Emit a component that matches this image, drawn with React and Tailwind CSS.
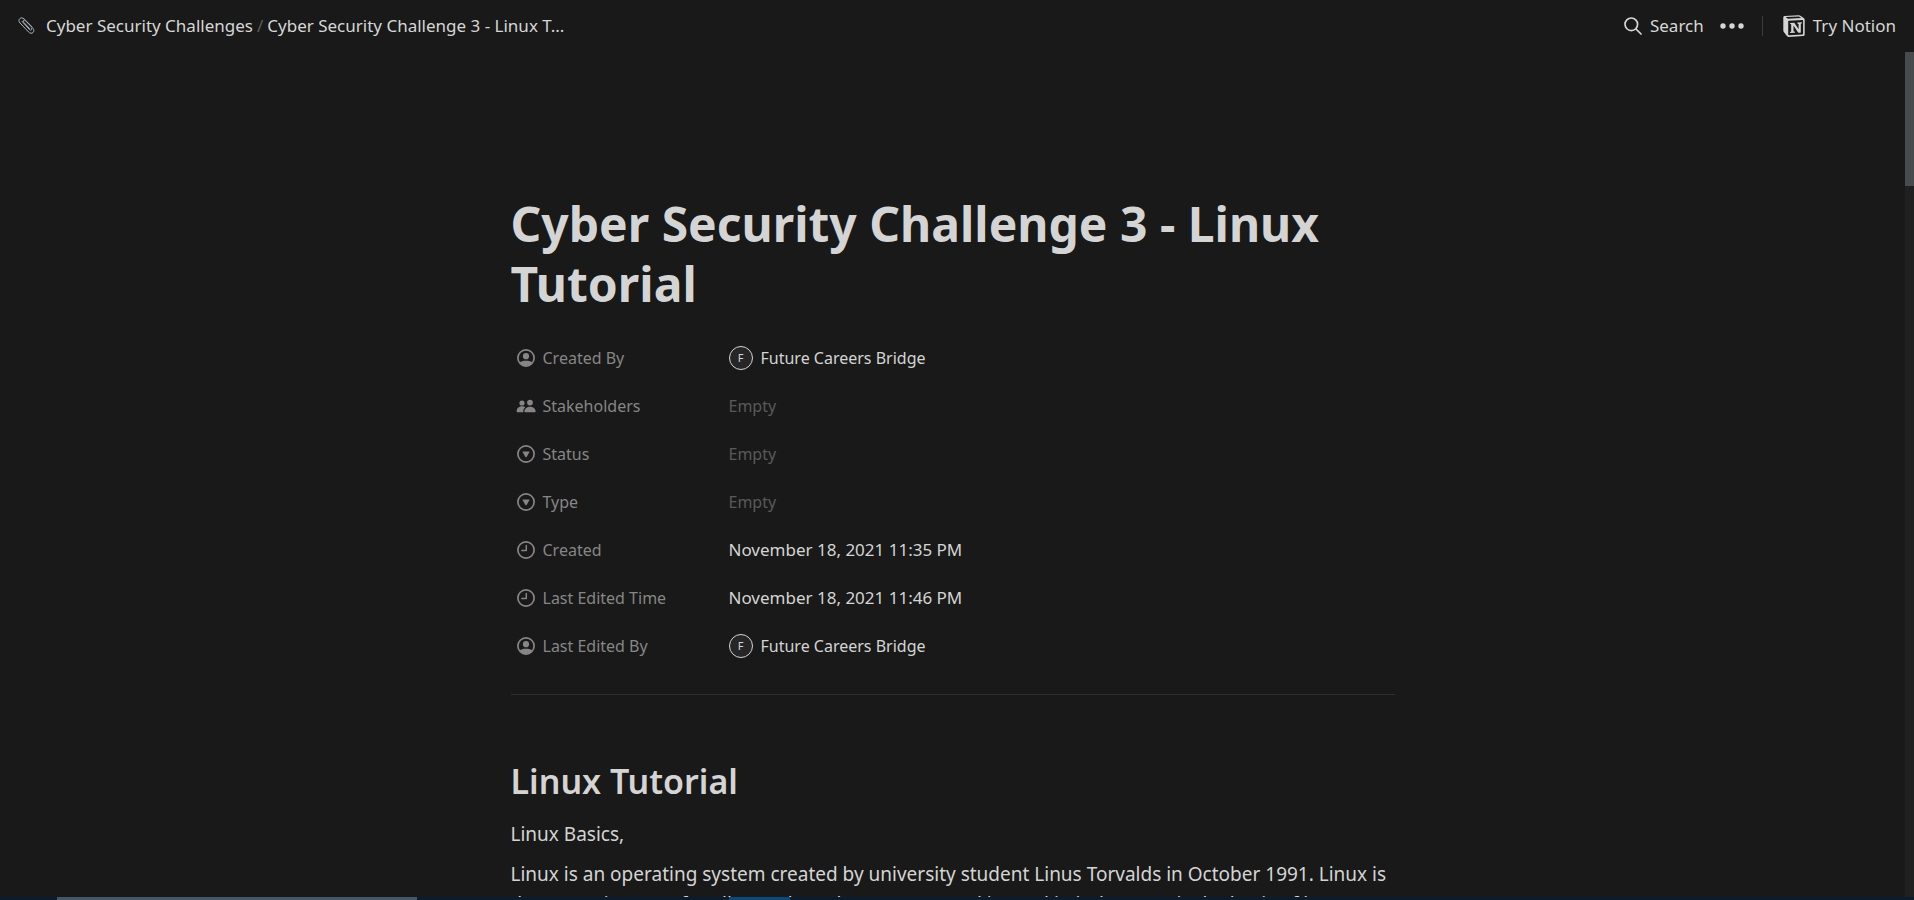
import React from "react";

const font = "font-['Noto_Sans','Open_Sans',sans-serif]";

function PersonIcon() {
  return (
    <svg viewBox="0 0 18 18" className="size-[18px] shrink-0" aria-hidden="true">
      <circle cx="9" cy="9" r="8.1" fill="none" stroke="currentColor" strokeWidth="1.7" />
      <circle cx="9" cy="7.2" r="3.1" fill="currentColor" />
      <path d="M2.6 13.4C4.6 11.2 13.4 11.2 15.4 13.4 12.5 18.3 5.5 18.3 2.6 13.4Z" fill="currentColor" />
    </svg>
  );
}

function PeopleIcon() {
  return (
    <svg viewBox="0 0 20 18" className="-mx-px h-[18px] w-5 shrink-0" aria-hidden="true" fill="currentColor">
      <circle cx="6" cy="6" r="2.6" />
      <circle cx="14" cy="5.6" r="2.9" />
      <path d="M.6 14.6C.6 8.6 8 8.4 9.2 10.6 7.8 11.6 7.2 13 7.3 15.2H1.2Q.6 15.2.6 14.6Z" />
      <path d="M8.4 14.5C8.4 8 19.6 8 19.6 14.5Q19.6 15.2 18.9 15.2H9.1Q8.4 15.2 8.4 14.5Z" />
    </svg>
  );
}

function SelectIcon() {
  return (
    <svg viewBox="0 0 18 18" className="size-[18px] shrink-0" aria-hidden="true">
      <circle cx="9" cy="9" r="8.1" fill="none" stroke="currentColor" strokeWidth="1.7" />
      <path d="M6.2 6.4H11.8Q12.8 6.4 12.3 7.3L9.6 11.9Q9 12.7 8.4 11.9L5.7 7.3Q5.2 6.4 6.2 6.4Z" fill="currentColor" />
    </svg>
  );
}

function ClockIcon() {
  return (
    <svg viewBox="0 0 18 18" className="size-[18px] shrink-0" aria-hidden="true" fill="none" stroke="currentColor">
      <circle cx="9" cy="9" r="8.1" strokeWidth="1.7" />
      <path d="M9.3 4.4V9.4H4.8" strokeWidth="1.5" strokeLinecap="round" strokeLinejoin="round" />
    </svg>
  );
}

function Person() {
  return (
    <span className="flex items-center gap-2">
      <span className="flex size-6 items-center justify-center rounded-full border border-[#d4d4d4] bg-[#262628] text-[11px]">F</span>
      <span>Future Careers Bridge</span>
    </span>
  );
}

const Empty = () => <span className="text-[#5a5a5a]">Empty</span>;
const Time = ({ children }) => <time className="text-[17px]">{children}</time>;

const properties = [
  { label: "Created By", icon: <PersonIcon />, value: <Person /> },
  { label: "Stakeholders", icon: <PeopleIcon />, value: <Empty /> },
  { label: "Status", icon: <SelectIcon />, value: <Empty /> },
  { label: "Type", icon: <SelectIcon />, value: <Empty /> },
  { label: "Created", icon: <ClockIcon />, value: <Time>November 18, 2021 11:35 PM</Time> },
  { label: "Last Edited Time", icon: <ClockIcon />, value: <Time>November 18, 2021 11:46 PM</Time> },
  { label: "Last Edited By", icon: <PersonIcon />, value: <Person /> },
];

function Header() {
  return (
    <header className="flex h-[52px] shrink-0 items-center justify-between px-[18px] text-[17px] text-[#d6d6d6]">
      <nav aria-label="Breadcrumb" className="flex items-center">
        <svg viewBox="0 0 18 18" className="mr-2.5 size-[18px]" aria-hidden="true" fill="none" stroke="#a9b4bb" strokeWidth="1" strokeLinecap="round">
          <path d="M11.6 11.6 5.6 5.2C4.2 3.7 5.9 2.2 7.3 3.6L14.8 11.2C17.8 14.6 13.7 18.2 10.6 15L2 6C-1 2.6 3-1 6.2 2L14 9.8" />
          <path d="M4.2 4.6 11.5 12.6C12.9 14 14.6 12.6 13.3 11.1" />
        </svg>
        <a href="#challenges">Cyber Security Challenges</a>
        <span className="mx-1 text-[#5c5c5c]">/</span>
        <a href="#page">Cyber Security Challenge 3 - Linux T...</a>
      </nav>
      <div className="flex items-center">
        <button className="flex items-center gap-2">
          <svg viewBox="0 0 18 18" className="size-[18px]" aria-hidden="true" fill="none" stroke="currentColor" strokeWidth="1.7" strokeLinecap="round">
            <circle cx="7.3" cy="7.3" r="6.3" />
            <path d="M12 12 17 17" />
          </svg>
          Search
        </button>
        <button aria-label="More options" className="ml-4">
          <svg viewBox="0 0 24 6" className="h-1.5 w-6" fill="currentColor" aria-hidden="true">
            <circle cx="3" cy="3" r="2.7" />
            <circle cx="12" cy="3" r="2.7" />
            <circle cx="21" cy="3" r="2.7" />
          </svg>
        </button>
        <span className="ml-[18px] h-5 w-px bg-[#3a3a3a]" />
        <a href="#try" className="ml-5 flex items-center gap-2">
          <svg viewBox="0 0 22 22" className="size-[22px]" aria-hidden="true">
            <path d="M1.4.9 15.6.2Q16.8.1 17.8.9L21 3.3Q21.7 3.9 21.7 4.9V19.4Q21.7 21 20.1 21.1L5.6 21.9Q4.6 22 3.9 21.1L1 17.3Q.3 16.4.3 15.3V2.3Q.3 1 1.4.9Z" fill="#d4d4d4" />
            <path d="M2.6 2.1 16 1.4 18.3 3 5 3.8Z" fill="#191919" />
            <path d="M5.2 6.2Q5.2 5.7 5.7 5.7L19.5 4.9Q20.1 4.9 20.1 5.5V18.8Q20.1 19.4 19.5 19.5L6 20.2Q5.2 20.2 5.2 19.5Z" fill="#191919" />
            <path d="M7.1 8 11.3 7.8 15.6 14.2V9L14.3 8.6V7.6L18.9 7.3V8.3L17.8 8.8V17.5Q16 18.3 14.9 17.2L10.5 10.5V16.2L11.9 16.8V17.8L7.1 18V17L8.2 16.6V9.3L7.1 9Z" fill="#d4d4d4" />
          </svg>
          Try Notion
        </a>
      </div>
    </header>
  );
}

export default function App() {
  return (
    <div className={`${font} flex h-screen flex-col overflow-hidden bg-[#191919] text-[#d4d4d4]`}>
      <Header />
      <div className="flex min-h-0 flex-1">
        <main className="min-w-0 flex-1 overflow-hidden">
          <article className="mx-auto w-full max-w-[884px] pt-[142px]">
            <h1 className="text-5xl leading-[60px] font-bold">Cyber Security Challenge 3 - Linux Tutorial</h1>
            <dl className="mt-5 text-base leading-6">
              {properties.map((p) => (
                <div key={p.label} className="flex h-12 items-center">
                  <dt className="flex w-[218px] items-center gap-2 pl-1.5 text-[#868686]">
                    {p.icon}
                    {p.label}
                  </dt>
                  <dd>{p.value}</dd>
                </div>
              ))}
            </dl>
            <hr className="mt-6 border-[#2f2f2f]" />
            <h2 className="mt-16 text-[34px] leading-[44px] font-semibold">Linux Tutorial</h2>
            <p className="mt-4 text-[19px] leading-[30px]">Linux Basics,</p>
            <p className="mt-2.5 text-[19px] leading-[30px]">
              Linux is an operating system created by university student Linus Torvalds in October 1991. Linux is the operating core for all UNIX based computers and is used in industry. It is the basis of how
            </p>
          </article>
        </main>
        <div className="w-[9px] bg-[#202020]">
          <div className="h-[134px] bg-[#474b4e]" />
        </div>
      </div>
      <footer className="flex h-[3px] shrink-0 bg-[#0b1c2c]">
        <div className="ml-[57px] w-[360px] bg-[#445767]" />
        <div className="ml-[312px] w-[61px] bg-[#0d4a7c]" />
      </footer>
    </div>
  );
}
